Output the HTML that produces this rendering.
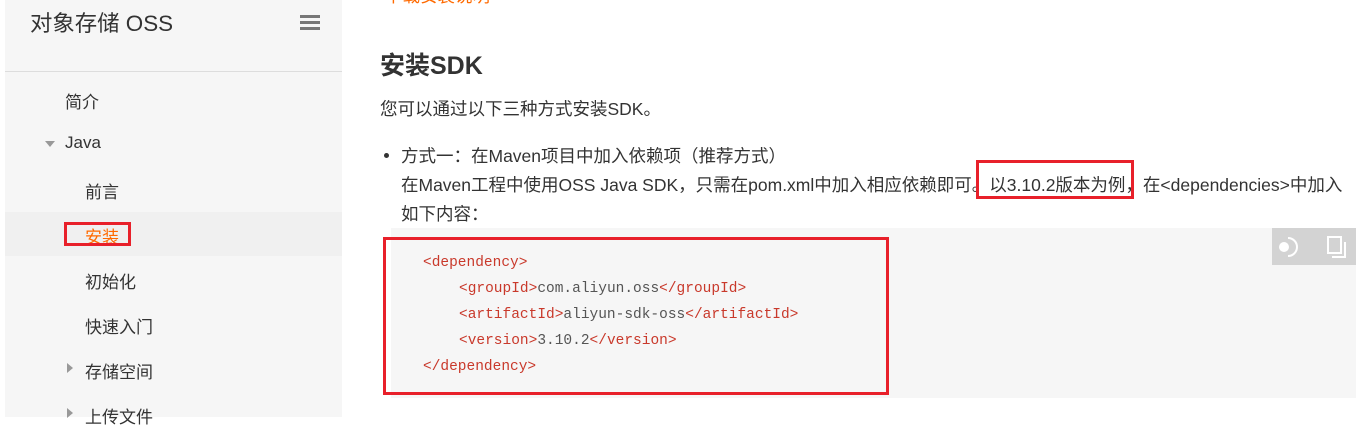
<!DOCTYPE html>
<html><head><meta charset="utf-8"><style>
body{margin:0;width:1356px;height:417px;overflow:hidden;background:#fff;font-family:"Liberation Sans","Noto Sans CJK SC",sans-serif;position:relative;color:#333}
.a{position:absolute;white-space:nowrap}
.side{position:absolute;left:5px;top:0;width:337px;height:417px;background:#f6f6f6}
.nav{font-size:17px;color:#333}
.m{font-size:17.5px}
.code{position:absolute;left:391px;top:228px;width:965px;height:170px;background:#f6f6f6}
.c{font-family:"Liberation Mono",monospace;font-size:14.5px;color:#555}
.t{color:#c9392b}
.rb{position:absolute;border:3px solid #e8202a;box-sizing:border-box}
</style></head><body>
<div class="side"></div>
<div class="a" style="left:30px;top:6px;font-size:22.4px;color:#333">对象存储 OSS</div>
<div class="a" style="left:300px;top:15px;width:20px;height:3px;background:#777;box-shadow:0 6px 0 #777,0 12px 0 #777"></div>
<div class="a" style="left:5px;top:71px;width:337px;height:1px;background:#ddd"></div>
<div class="a" style="left:5px;top:212px;width:337px;height:44px;background:#f0f0f0"></div>
<div class="a nav" style="left:65px;top:88px">简介</div>
<div class="a" style="left:45px;top:141px;width:0;height:0;border-left:5px solid transparent;border-right:5px solid transparent;border-top:6px solid #999"></div>
<div class="a nav" style="left:65px;top:133px">Java</div>
<div class="a nav" style="left:85px;top:178px">前言</div>
<div class="a nav" style="left:85px;top:223px;color:#ff6a00">安装</div>
<div class="rb" style="left:64px;top:222px;width:67px;height:24px"></div>
<div class="a nav" style="left:85px;top:268px">初始化</div>
<div class="a nav" style="left:85px;top:313px">快速入门</div>
<div class="a" style="left:67px;top:363px;border-top:5px solid transparent;border-bottom:5px solid transparent;border-left:6px solid #999"></div>
<div class="a nav" style="left:85px;top:358px">存储空间</div>
<div class="a" style="left:67px;top:408px;border-top:5px solid transparent;border-bottom:5px solid transparent;border-left:6px solid #999"></div>
<div class="a nav" style="left:85px;top:403px">上传文件</div>

<div class="a m" style="left:385px;top:-17px;color:#ff6a00">下载安装说明</div>
<div class="a" style="left:380px;top:46px;font-size:25px;font-weight:bold;color:#333">安装SDK</div>
<div class="a m" style="left:380px;top:96px">您可以通过以下三种方式安装SDK。</div>
<div class="a" style="left:384px;top:153px;width:5px;height:5px;border-radius:50%;background:#333"></div>
<div class="a m" style="left:401px;top:143px">方式一：在Maven项目中加入依赖项（推荐方式）</div>
<div class="a m" style="left:401px;top:172px">在Maven工程中使用OSS Java SDK，只需在pom.xml中加入相应依赖即可。以3.10.2版本为例，在&lt;dependencies&gt;中加入</div>
<div class="a m" style="left:401px;top:201px">如下内容：</div>
<div class="rb" style="left:976px;top:160px;width:158px;height:39px"></div>

<div class="code"></div>
<div class="a" style="left:1272px;top:228px;width:84px;height:37px;background:#d3d3d3"></div>
<svg class="a" style="left:1276px;top:234px" width="80" height="26"><circle cx="8" cy="13" r="5" fill="#fff"/><path d="M12 4 A9 9 0 1 1 12 22" fill="none" stroke="#fff" stroke-width="2"/><rect x="52" y="3" width="13" height="16" fill="none" stroke="#fff" stroke-width="2"/><path d="M56 23 H69 V8" fill="none" stroke="#fff" stroke-width="2"/></svg>
<div class="a c" style="left:423px;top:255px"><span class="t">&lt;dependency&gt;</span></div>
<div class="a c" style="left:459px;top:281px"><span class="t">&lt;groupId&gt;</span>com.aliyun.oss<span class="t">&lt;/groupId&gt;</span></div>
<div class="a c" style="left:459px;top:307px"><span class="t">&lt;artifactId&gt;</span>aliyun-sdk-oss<span class="t">&lt;/artifactId&gt;</span></div>
<div class="a c" style="left:459px;top:333px"><span class="t">&lt;version&gt;</span>3.10.2<span class="t">&lt;/version&gt;</span></div>
<div class="a c" style="left:423px;top:359px"><span class="t">&lt;/dependency&gt;</span></div>
<div class="rb" style="left:383px;top:237px;width:506px;height:158px"></div>
</body></html>
